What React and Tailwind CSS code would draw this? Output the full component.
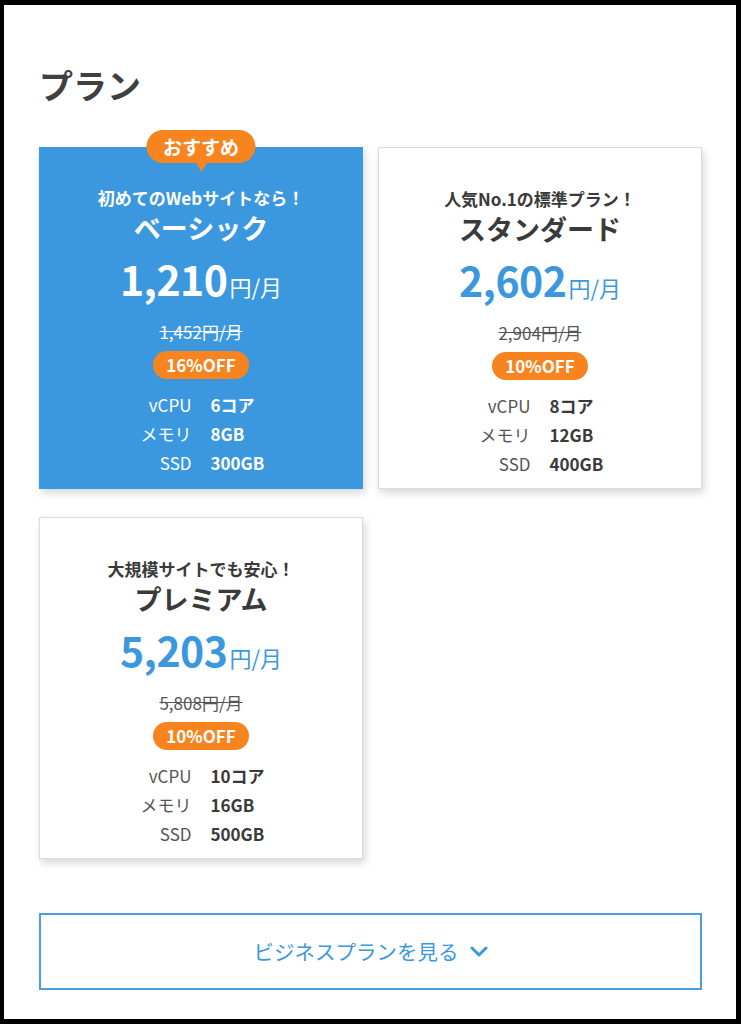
import React from "react";

const plans = [
  {
    id: "basic",
    tagline: "初めてのWebサイトなら！",
    name: "ベーシック",
    price: "1,210",
    before: "1,452円/月",
    off: "16%OFF",
    specs: [
      ["vCPU", "6コア"],
      ["メモリ", "8GB"],
      ["SSD", "300GB"],
    ],
    featured: true,
  },
  {
    id: "standard",
    tagline: "人気No.1の標準プラン！",
    name: "スタンダード",
    price: "2,602",
    before: "2,904円/月",
    off: "10%OFF",
    specs: [
      ["vCPU", "8コア"],
      ["メモリ", "12GB"],
      ["SSD", "400GB"],
    ],
  },
  {
    id: "premium",
    tagline: "大規模サイトでも安心！",
    name: "プレミアム",
    price: "5,203",
    before: "5,808円/月",
    off: "10%OFF",
    specs: [
      ["vCPU", "10コア"],
      ["メモリ", "16GB"],
      ["SSD", "500GB"],
    ],
  },
];

const PlanCard = ({ plan }) => {
  const featured = plan.featured;
  return (
    <div
      className={`relative flex flex-col items-center pt-[39px] pb-[10px] shadow-[2px_4px_8px_rgba(0,0,0,0.16)] ${
        featured ? "bg-[#3b98df]" : "bg-white border border-[#dcdcdc]"
      }`}
    >
      {featured && (
        <div className="absolute top-[-17px] left-1/2 -translate-x-1/2 flex flex-col items-center">
          <div className="h-[33px] w-[109px] rounded-full bg-[#f7841f] text-white text-[19px] font-bold leading-[33px] text-center">
            おすすめ
          </div>
          <div className="w-0 h-0 border-l-[6px] border-r-[6px] border-t-[10px] border-l-transparent border-r-transparent border-t-[#f7841f] -mt-[1px]" />
        </div>
      )}
      <p className={`text-[17px] font-bold leading-[24px] ${featured ? "text-white" : "text-[#3a3a3a]"}`}>
        {plan.tagline}
      </p>
      <h3 className={`text-[27px] font-bold leading-[36px] ${featured ? "text-white" : "text-[#3a3a3a]"}`}>
        {plan.name}
      </h3>
      <div className={`mt-[4px] h-[56px] flex items-baseline ${featured ? "text-white" : "text-[#3b98df]"}`}>
        <span className="text-[41px] font-bold leading-[56px] tracking-[-0.5px]">{plan.price}</span>
        <span className="text-[22px] leading-[56px] ml-[2px]">円/月</span>
      </div>
      <p
        className={`mt-[14px] text-[17px] leading-[24px] line-through ${
          featured ? "text-white" : "text-[#555]"
        }`}
      >
        {plan.before}
      </p>
      <div className="mt-[7px] h-[28px] w-[96px] rounded-full bg-[#f7841f] text-white text-[17px] font-bold leading-[28px] text-center">
        {plan.off}
      </div>
      <div className="mt-[11px] grid grid-cols-2 gap-x-[19px] w-full">
        {plan.specs.map(([label, value]) => (
          <React.Fragment key={label}>
            <span className={`text-right text-[17px] leading-[29px] ${featured ? "text-white" : "text-[#555]"}`}>
              {label}
            </span>
            <span className={`text-[17px] font-bold leading-[29px] ${featured ? "text-white" : "text-[#3a3a3a]"}`}>
              {value}
            </span>
          </React.Fragment>
        ))}
      </div>
    </div>
  );
};

const App = () => {
  return (
    <div className="bg-black pt-[5px] pl-[4px] pr-[5px] pb-[5px] font-['Noto_Sans_CJK_JP',sans-serif]">
      <div className="bg-white h-[1014px] pl-[35px] pr-[34px] pt-[57px]">
        <h2 className="text-[34px] font-bold leading-[46px] text-[#404040]">プラン</h2>

        <div className="mt-[39px] grid grid-cols-2 gap-x-[15px] gap-y-[28px]">
          {plans.map((plan) => (
            <PlanCard key={plan.id} plan={plan} />
          ))}
        </div>

        <button className="mt-[54px] w-full h-[77px] border-2 border-[#4a9fe0] flex items-center justify-center gap-[11px] text-[#3b98df] text-[20.5px]">
          <span>ビジネスプランを見る</span>
          <svg width="18" height="12" viewBox="0 0 18 12" fill="none">
            <polyline points="2,2 9,9 16,2" stroke="#3b98df" strokeWidth="3" strokeLinecap="round" strokeLinejoin="round" />
          </svg>
        </button>
      </div>
    </div>
  );
};

export default App;
